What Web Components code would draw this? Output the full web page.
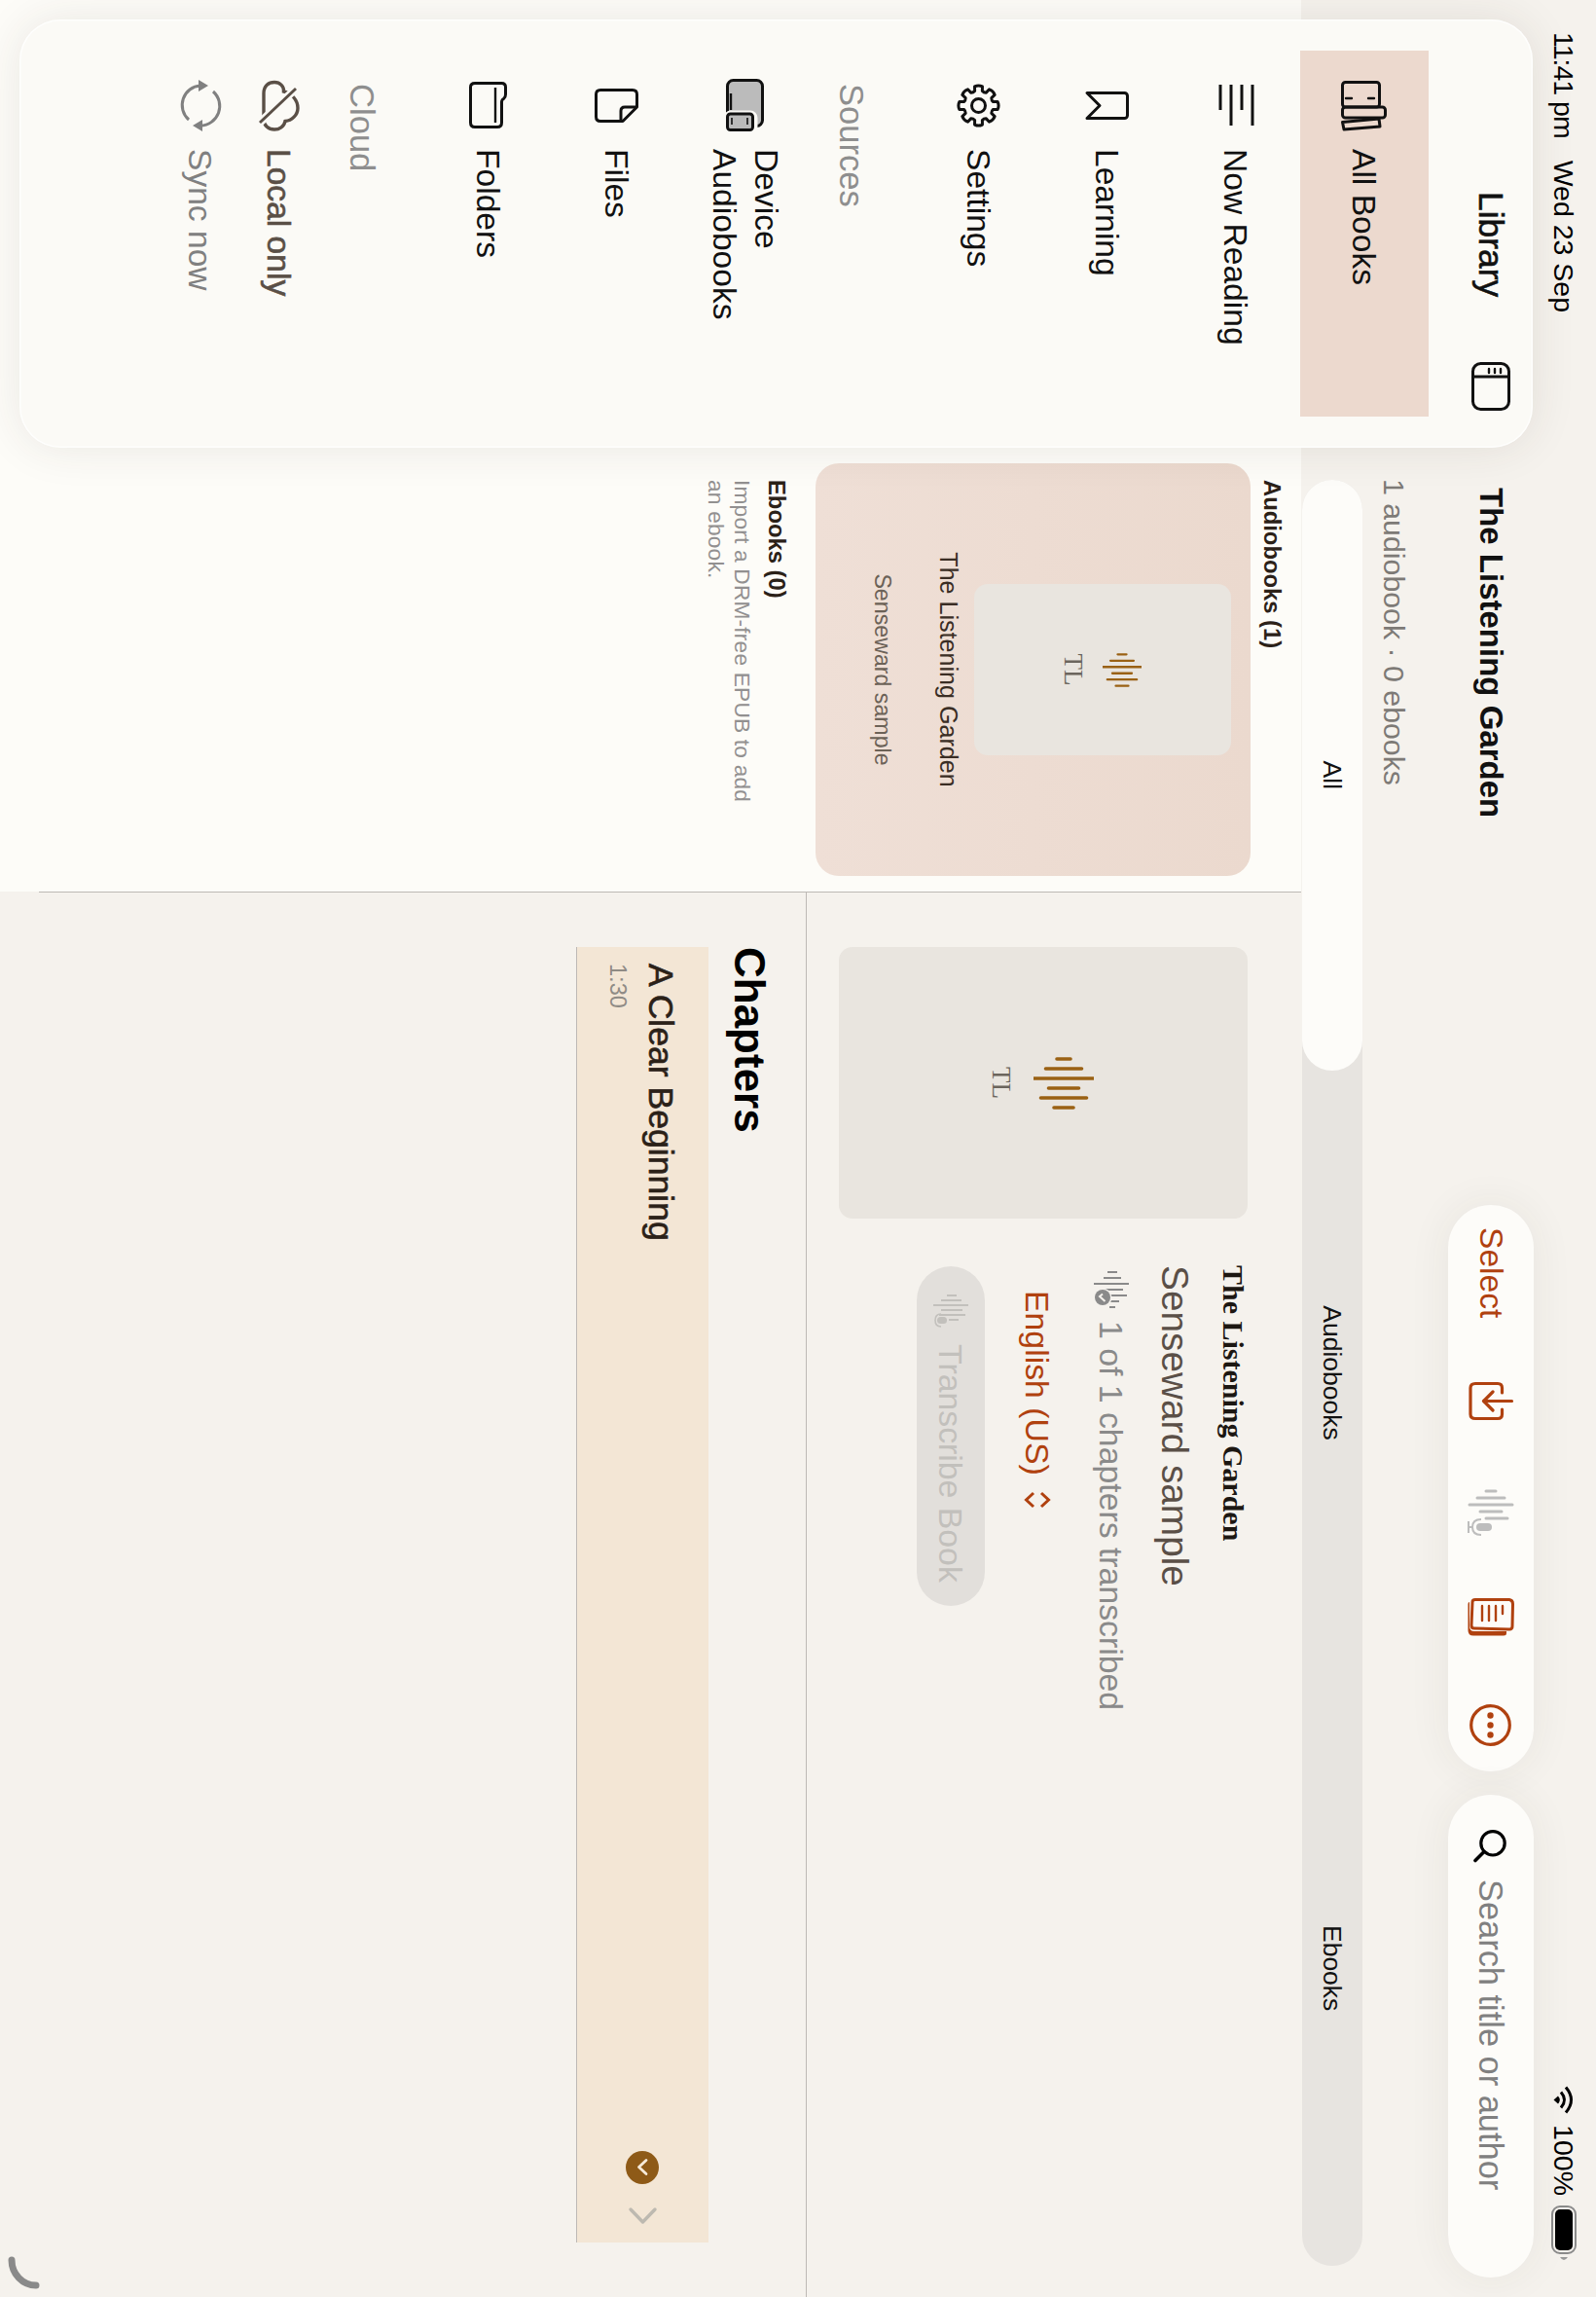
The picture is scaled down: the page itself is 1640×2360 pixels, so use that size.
<!DOCTYPE html>
<html>
<head>
<meta charset="utf-8">
<title>Library</title>
<style>
  html, body { margin: 0; padding: 0; background: #f5f2ed; }
  body { font-family: "Liberation Sans", Arial, sans-serif; }
</style>
</head>
<body>
<library-app></library-app>

<script>
(function() {
  const ORANGE = '#b0410f';

  function gearPath(cx, cy, outer, inner, teeth) {
    const pt = (r, a) => (cx + r * Math.cos(a)).toFixed(2) + ' ' + (cy + r * Math.sin(a)).toFixed(2);
    const step = Math.PI * 2 / teeth;
    let d = '';
    for (let i = 0; i < teeth; i++) {
      const a = i * step - Math.PI / 2;
      d += (i ? 'L' : 'M') + pt(outer, a - 0.2) + 'Q' + pt(outer + 1.6, a) + ' ' + pt(outer, a + 0.2);
      d += 'L' + pt(inner, a + step / 2 - 0.14) + 'Q' + pt(inner - 1.2, a + step / 2) + ' ' + pt(inner, a + step / 2 + 0.14);
    }
    return d + 'Z';
  }

  // all drawn upright, the whole app gets rotated afterwards
  const ICONS = {
    books: [51, 47, `<g fill="none" stroke="currentColor" stroke-width="3" stroke-linejoin="round" stroke-linecap="round">
      <rect x="1.5" y="7.5" width="25.5" height="38" rx="3"/><rect x="27" y="1.5" width="11" height="44" rx="3"/>
      <path d="M39 8L47 7L50 44L42.5 45.5Z"/><path d="M18 13V19M18 36V42" stroke-width="2.4"/></g>`],
    sidebar: [50, 40, `<g fill="none" stroke="currentColor" stroke-width="3" stroke-linecap="round">
      <rect x="1.5" y="1.5" width="47" height="37" rx="8"/><path d="M15 2V38"/><path d="M7 10H11M7 16H11M7 22H11" stroke-width="2.4"/></g>`],
    lines: [42, 38, `<path d="M0 2H42M0 13H26M0 24H42M0 35H26" fill="none" stroke="currentColor" stroke-width="3"/>`],
    bookmark: [29, 45, `<path d="M4.5 1.5H24.5a3 3 0 0 1 3 3V43L14.5 30L1.5 43V4.5a3 3 0 0 1 3-3z" fill="none" stroke="currentColor" stroke-width="3" stroke-linejoin="round"/>`],
    gear: [45, 45, `<path d="${gearPath(22.5, 22.5, 20, 15.5, 8)}" fill="none" stroke="currentColor" stroke-width="3" stroke-linejoin="round"/><circle cx="22.5" cy="22.5" r="7" fill="none" stroke="currentColor" stroke-width="3"/>`],
    device: [54, 39, `<rect x="1.5" y="1.5" width="47" height="36" rx="6" fill="#bbb" stroke="currentColor" stroke-width="3"/>
      <path d="M15 34H32" stroke="currentColor" stroke-width="2.4"/>
      <rect x="36" y="10" width="17" height="28" rx="4" fill="#bbb" stroke="#fbfaf6" stroke-width="7"/>
      <rect x="36" y="11.5" width="16.5" height="26" rx="3" fill="#bbb" stroke="currentColor" stroke-width="3"/>
      <path d="M40 17H47M40 33H47" stroke="currentColor" stroke-width="1.6"/>`],
    note: [35, 45, `<g fill="none" stroke="currentColor" stroke-width="3" stroke-linejoin="round">
      <path d="M19 1.5H6Q1.5 1.5 1.5 6V39Q1.5 43.5 6 43.5H29Q33.5 43.5 33.5 39V16Z"/><path d="M19 2V14Q19 18 23 18H33"/></g>`],
    folder: [48, 39, `<g fill="none" stroke="currentColor" stroke-width="3" stroke-linejoin="round">
      <path d="M5.5 1.5H13Q16 1.5 17.5 3.5Q18.5 5.5 21 5.5H42Q46.5 5.5 46.5 10V33Q46.5 37.5 42 37.5H5.5Q1.5 37.5 1.5 33V5.5Q1.5 1.5 5.5 1.5Z"/><path d="M6 12H42" stroke-width="2.4"/></g>`],
    cloudoff: [51, 42, `<path d="M13 37C5 37 1.5 32 1.5 26C1.5 20 6 16 11 16.5C13 8 20 2 28 2C35 2 41 8 41.5 15C47 16 50 21 50 26C50 32 46 37 40 37Z" fill="none" stroke="currentColor" stroke-width="3.4"/>
      <path d="M8 4L43 41" stroke="#fbfaf6" stroke-width="8"/><path d="M8 4L43 41" stroke="currentColor" stroke-width="3"/>`],
    sync: [53, 44, `<g fill="none" stroke="currentColor" stroke-width="3"><path d="M41 34A20 20 0 0 1 6 22"/><path d="M12 9A20 20 0 0 1 47 22"/></g>
      <path d="M0 24H12L6 14ZM41 20H53L47 30Z" fill="currentColor"/>`],
    importbox: [39, 46, `<g fill="none" stroke="currentColor" stroke-width="3.2" stroke-linecap="round" stroke-linejoin="round">
      <path d="M11 11.5H6Q1.5 11.5 1.5 16V39Q1.5 44 6 44H33Q37.5 44 37.5 39V16Q37.5 11.5 33 11.5H28"/><path d="M19.5 1.5V30M10 21L19.5 30.5L29 21"/></g>`],
    wavemic: [48, 47, `<path d="M2 18V28M9 9V37M16 1V45M23 12V34M30 6V28" fill="none" stroke="currentColor" stroke-width="3" stroke-linecap="round"/>
      <rect x="35" y="22" width="8" height="16" rx="4" fill="currentColor"/><path d="M31 33Q31 42 39 42Q47 42 47 33M39 42V46M33 46H45" fill="none" stroke="currentColor" stroke-width="2"/>`],
    pages: [39, 48, `<g fill="none" stroke="currentColor" stroke-width="3" stroke-linecap="round" stroke-linejoin="round">
      <path d="M6 1.5L29 2Q32 2 32 5L31 41Q31 44 28 44L4 43Q1.5 43 1.5 40V5Q2 1.5 6 1.5Z"/>
      <path d="M8 12H16M8 19H23M8 26H23M8 33H23" stroke-width="2.4"/></g>
      <path d="M34 8H36Q38.5 8 38.5 11V42Q38.5 47.5 33 47.5H6Q4 47.5 4 46H29Q34 46 34 41Z" fill="currentColor"/>`],
    more: [43, 43, `<circle cx="21.5" cy="21.5" r="19.8" fill="none" stroke="currentColor" stroke-width="3.2"/><circle cx="11.5" cy="21.5" r="3.2" fill="currentColor"/><circle cx="21.5" cy="21.5" r="3.2" fill="currentColor"/><circle cx="31.5" cy="21.5" r="3.2" fill="currentColor"/>`],
    search: [33, 33, `<circle cx="13.8" cy="14" r="12.2" fill="none" stroke="currentColor" stroke-width="3.2"/><path d="M22.5 23L31.5 32" fill="none" stroke="currentColor" stroke-width="3.6" stroke-linecap="round"/>`],
    wifi: [29, 21, `<g fill="none" stroke="currentColor" stroke-width="3"><path d="M1.5 8Q14.5 -3 27.5 8"/><path d="M6.5 13Q14.5 6 22.5 13"/></g><path d="M10.5 16Q14.5 12.5 18.5 16L14.5 20.5Z" fill="currentColor"/>`],
    battery: [58, 26, `<rect x="1" y="1" width="48" height="24" rx="8" fill="none" stroke="#8b8b8b" stroke-width="2"/><rect x="4" y="4" width="42" height="18" rx="5" fill="#000"/><path d="M53 9V17Q56 15 56 13Q56 11 53 9Z" fill="#9a9a9a"/>`],
    updown: [18, 28, `<path d="M2 10L9 2.5L16 10M2 18L9 25.5L16 18" fill="none" stroke="currentColor" stroke-width="3"/>`],
    wavedone: [42, 36, `<path d="M2 12V22M8 8V26M14 0V36M20 6V30M26 2V32M32 10V24M38 14V20" fill="none" stroke="currentColor" stroke-width="2"/>
      <circle cx="28" cy="27" r="9.5" fill="#f5f2ed"/><circle cx="28" cy="27" r="8" fill="currentColor"/><path d="M24.5 27L27 30L32 24.5" fill="none" stroke="#f5f2ed" stroke-width="2"/>`],
    wavemicthin: [36, 36, `<path d="M2 12V22M7 7V28M12 0V36M17 6V28M22 3V30M27 10V20" fill="none" stroke="currentColor" stroke-width="2"/>
      <rect x="24" y="22" width="7" height="10" rx="3.5" fill="currentColor"/><path d="M21 28Q21 34 27.5 34Q34 34 34 28" fill="none" stroke="currentColor" stroke-width="1.6"/>`],
    badgeback: [34, 34, `<circle cx="17" cy="17" r="17" fill="#8e5a17"/><path d="M9.5 14L16.5 21.5L23.5 14" transform="translate(0 -1)" fill="none" stroke="#f6ead8" stroke-width="2.8" stroke-linecap="round" stroke-linejoin="round"/>`],
    chevright: [17, 29, `<path d="M2 2L15 14.5L2 27" fill="none" stroke="#bdb9b0" stroke-width="3.4" stroke-linecap="round" stroke-linejoin="round"/>`]
  };

  class UiIcon extends HTMLElement {
    connectedCallback() {
      const shadow = this.shadowRoot || this.attachShadow({ mode: 'open' });
      const [w, h, body] = ICONS[this.getAttribute('name')];
      shadow.innerHTML = `<style>:host { display: block; flex: none; width: ${w}px; height: ${h}px; } svg { display: block; overflow: visible; }</style>
        <svg xmlns="http://www.w3.org/2000/svg" width="${w}" height="${h}" viewBox="0 0 ${w} ${h}">${body}</svg>`;
    }
  }

  class StatusBar extends HTMLElement {
    constructor() {
      super();
      this.attachShadow({ mode: 'open' }).innerHTML = `
        <style>
          :host { display: flex; height: 64px; flex: none; padding: 0 36px 0 33px; box-sizing: border-box; font-size: 28.5px; color: #000; }
          .left, .right { display: flex; align-items: center; height: 66px; }
          .left { flex: 1; gap: 23px; }
          .time { letter-spacing: -1px; }
          .right ui-icon:first-child { margin-right: 11px; }
          .right ui-icon:last-child { margin-left: 10px; }
        </style>
        <div class="left"><span class="time">11:41 pm</span><span>Wed 23 Sep</span></div>
        <div class="right"><ui-icon name="wifi"></ui-icon><span>100%</span><ui-icon name="battery"></ui-icon></div>`;
    }
  }

  class TopBar extends HTMLElement {
    constructor() {
      super();
      this.attachShadow({ mode: 'open' }).innerHTML = `
        <style>
          :host { display: flex; flex: none; height: 88px; align-items: center; }
          h1 { margin: 0 0 0 501px; width: 737px; font-size: 33px; font-weight: 700; color: #111; }
          .pill { background: #fdfcf9; height: 88px; border-radius: 44px; box-sizing: border-box; display: flex; align-items: center; box-shadow: 0 0 44px rgba(60, 50, 40, .07); }
          .tools { width: 582px; color: ${ORANGE}; padding-left: 23px; }
          .tools span { font-size: 33.6px; width: 159px; }
          .tools .off { color: #bdbdbd; margin-left: 71px; }
          .tools .pg { margin-left: 64px; }
          .tools .mr { margin-left: 70px; }
          .search { width: 496px; margin-left: 24px; padding-left: 36px; gap: 18px; font-size: 34.4px; color: #808080; }
          .search ui-icon { color: #000; }
        </style>
        <h1>The Listening Garden</h1>
        <div class="pill tools">
          <span>Select</span>
          <ui-icon name="importbox"></ui-icon>
          <ui-icon name="wavemic" class="off"></ui-icon>
          <ui-icon name="pages" class="pg"></ui-icon>
          <ui-icon name="more" class="mr"></ui-icon>
        </div>
        <div class="pill search"><ui-icon name="search"></ui-icon><span>Search title or author</span></div>`;
    }
  }

  class SegControl extends HTMLElement {
    constructor() {
      super();
      this.attachShadow({ mode: 'open' }).innerHTML = `
        <style>
          :host { display: grid; grid-template-columns: repeat(3, 1fr); flex: none; width: 1835px; height: 62px; margin-left: 493px; border-radius: 31px; background: #e7e4e0; font-size: 26.5px; color: #111; }
          div { display: flex; align-items: center; justify-content: center; border-radius: 31px; }
          .on { background: #fdfcf9; margin-right: 5px; }
        </style>
        <div class="on">All</div><div>Audiobooks</div><div>Ebooks</div>`;
    }
  }

  class SideItem extends HTMLElement {
    constructor() {
      super();
      this.attachShadow({ mode: 'open' }).innerHTML = `
        <style>
          :host { display: flex; align-items: center; box-sizing: border-box; height: 132px; width: 376px; margin-left: 32px; padding: 0 10px 0 26px; font-size: 33.6px; line-height: 43px; color: #111; }
          :host([selected]) { background: #ecd9ce; }
          :host([h="86"]) { height: 86px; }
          :host([h="76"]) { height: 76px; }
          .icon { flex: none; width: 60px; margin-right: 15px; display: flex; justify-content: center; }
        </style>
        <div class="icon"><slot name="icon"></slot></div>
        <div><slot></slot></div>`;
    }
  }

  class SideLabel extends HTMLElement {
    constructor() {
      super();
      this.attachShadow({ mode: 'open' }).innerHTML = `
        <style>:host { display: flex; align-items: center; box-sizing: border-box; padding: 22px 0 0 66px; height: 108px; font-size: 34.6px; color: #8e8e8e; }</style>
        <slot></slot>`;
    }
  }

  class SideBar extends HTMLElement {
    constructor() {
      super();
      this.attachShadow({ mode: 'open' }).innerHTML = `
        <style>
          :host { display: block; position: absolute; left: 20px; top: 65px; width: 440px; height: 1555px; box-sizing: border-box; border-radius: 42px; background: #fbfaf6; box-shadow: inset 0 0 0 1.5px rgba(255,255,255,.75), 0 0 46px rgba(60, 50, 40, .1); }
          header { display: flex; align-items: center; height: 86px; margin-bottom: 21px; padding-left: 177px; font-size: 35.4px; -webkit-text-stroke: .6px #111; color: #111; }
          header span { width: 175px; }
          .b { color: #5a4f46; -webkit-text-stroke: .6px #5a4f46; }
          .g { color: #808080; }
        </style>
        <header><span>Library</span><ui-icon name="sidebar"></ui-icon></header>
        <side-item selected><ui-icon slot="icon" name="books"></ui-icon>All Books</side-item>
        <side-item><ui-icon slot="icon" name="lines"></ui-icon>Now Reading</side-item>
        <side-item><ui-icon slot="icon" name="bookmark"></ui-icon>Learning</side-item>
        <side-item><ui-icon slot="icon" name="gear"></ui-icon>Settings</side-item>
        <side-label>Sources</side-label>
        <side-item><ui-icon slot="icon" name="device"></ui-icon>Device Audiobooks</side-item>
        <side-item><ui-icon slot="icon" name="note"></ui-icon>Files</side-item>
        <side-item><ui-icon slot="icon" name="folder"></ui-icon>Folders</side-item>
        <side-label style="height:106px">Cloud</side-label>
        <side-item h="86" class="b"><ui-icon slot="icon" name="cloudoff" style="color:#5a4f46"></ui-icon><span class="b">Local only</span></side-item>
        <side-item h="76" class="g"><ui-icon slot="icon" name="sync" style="color:#808080"></ui-icon><span class="g">Sync now</span></side-item>`;
    }
  }

  // cover with waveform and initials, used in the card and in the detail panel
  class CoverArt extends HTMLElement {
    constructor() {
      super();
      const big = this.hasAttribute('big');
      const w = big ? 279 : 176, h = big ? 420 : 264, bw = big ? 54 : 35, bh = big ? 62 : 40, gap = big ? 23 : 20;
      const lens = [14, 37, 62, 31, 47, 20];
      const bars = lens.map((l, i) => `<path d="M${2 + i * 10} ${31 - l / 2}V${31 + l / 2}"/>`).join('');
      this.attachShadow({ mode: 'open' }).innerHTML = `
        <style>
          :host { display: flex; flex: none; flex-direction: column; align-items: center; justify-content: center; gap: ${gap}px; width: ${w}px; height: ${h}px; border-radius: 14px; background: #e9e5df; }
          span { font: 27px/20px "Liberation Serif", "Times New Roman", serif; color: #6b655d; }
          svg { display: block; }
        </style>
        <svg xmlns="http://www.w3.org/2000/svg" width="${bw}" height="${bh}" viewBox="0 0 54 62"><g fill="none" stroke="#9a6114" stroke-width="3.6" stroke-linecap="round">${bars}</g></svg>
        <span>TL</span>`;
    }
  }

  class BookCard extends HTMLElement {
    constructor() {
      super();
      this.attachShadow({ mode: 'open' }).innerHTML = `
        <style>
          :host { display: flex; flex-direction: column; align-items: center; box-sizing: border-box; width: 424px; height: 447px; padding-top: 20px; border-radius: 24px; background: linear-gradient(#ebd9ce, #efdfd6); }
          .t { margin-top: 10px; font-size: 25.1px; line-height: 32px; color: #3a2d24; }
          .s { margin-top: 36px; font-size: 23.2px; line-height: 32px; color: #6c6257; }
        </style>
        <cover-art></cover-art>
        <div class="t"><slot name="title"></slot></div>
        <div class="s"><slot name="author"></slot></div>`;
    }
  }

  class BookList extends HTMLElement {
    constructor() {
      super();
      this.attachShadow({ mode: 'open' }).innerHTML = `
        <style>
          :host { display: block; flex: none; box-sizing: border-box; width: 916px; padding: 15px 16px 0 476px; background: #fdfcf8; }
          h2 { margin: 0 0 0 17px; font-size: 23.8px; line-height: 30px; font-weight: 700; color: #2b2118; }
          .a { margin-bottom: 7px; }
          .e { margin-top: 25px; }
          p { margin: 7px 0 0 17px; width: 345px; font-size: 22.7px; letter-spacing: .2px; line-height: 27px; color: #929090; }
        </style>
        <h2 class="a">Audiobooks (1)</h2>
        <book-card><span slot="title">The Listening Garden</span><span slot="author">Senseward sample</span></book-card>
        <h2 class="e">Ebooks (0)</h2>
        <p>Import a DRM-free EPUB to add an ebook.</p>`;
    }
  }

  class DetailHead extends HTMLElement {
    constructor() {
      super();
      this.attachShadow({ mode: 'open' }).innerHTML = `
        <style>
          :host { display: flex; flex: none; box-sizing: border-box; height: 509px; padding: 55px 0 0 56px; border-bottom: 1px solid #bdb9b5; }
          .info { display: flex; flex-direction: column; align-items: flex-start; margin: -3px 0 0 48px; }
          .t { font: 700 30px/36px "Liberation Serif", "Times New Roman", serif; color: #1c1712; }
          .s { margin-top: 20px; font-size: 38.8px; line-height: 44px; color: #5a4f47; }
          .c { display: flex; align-items: center; margin: 23px 0 0 5px; height: 40px; gap: 10px; font-size: 33.8px; color: #8a8a8a; }
          .l { display: flex; align-items: center; margin-top: 36px; height: 40px; gap: 16px; margin-left: 26px; font-size: 33.8px; color: ${ORANGE}; }
          button { display: flex; align-items: center; gap: 16px; margin: 34px 0 0 1px; width: 349px; height: 70px; box-sizing: border-box; padding: 0 0 0 28px; border: 0; border-radius: 35px; background: #e2dfdb; font: 33.8px "Liberation Sans", Arial, sans-serif; color: #c2c0bc; }
        </style>
        <cover-art big></cover-art>
        <div class="info">
          <div class="t">The Listening Garden</div>
          <div class="s">Senseward sample</div>
          <div class="c"><ui-icon name="wavedone"></ui-icon><span>1 of 1 chapters transcribed</span></div>
          <div class="l"><span>English (US)</span><ui-icon name="updown"></ui-icon></div>
          <button><ui-icon name="wavemicthin"></ui-icon><span>Transcribe Book</span></button>
        </div>`;
    }
  }

  class ChapterRow extends HTMLElement {
    constructor() {
      super();
      this.attachShadow({ mode: 'open' }).innerHTML = `
        <style>
          :host { display: flex; align-items: center; box-sizing: border-box; width: 1331px; height: 136px; padding: 0 19px 0 17px; background: #f3e6d5; border-bottom: 1px solid #bdb9b5; }
          .txt { flex: 1; }
          .n { font-size: 35.6px; line-height: 40px; -webkit-text-stroke: .6px #2b2118; color: #2b2118; }
          .d { margin-top: 10px; font-size: 23.6px; line-height: 28px; color: #8f8b85; }
          .gap { margin-right: 24px; }
        </style>
        <div class="txt"><div class="n"><slot name="name"></slot></div><div class="d"><slot name="time"></slot></div></div>
        <ui-icon name="badgeback" class="gap"></ui-icon>
        <ui-icon name="chevright"></ui-icon>`;
    }
  }

  class DetailPanel extends HTMLElement {
    constructor() {
      super();
      this.attachShadow({ mode: 'open' }).innerHTML = `
        <style>
          :host { display: block; flex: 1; }
          h2 { margin: 32px 0 16px 56px; font-size: 44px; line-height: 52px; font-weight: 700; color: #000; }
          chapter-row { margin-left: 56px; }
        </style>
        <detail-head></detail-head>
        <h2>Chapters</h2>
        <chapter-row><span slot="name">A Clear Beginning</span><span slot="time">1:30</span></chapter-row>`;
    }
  }

  class LibraryApp extends HTMLElement {
    constructor() {
      super();
      this.attachShadow({ mode: 'open' }).innerHTML = `
        <style>
          :host { display: block; width: 1640px; height: 2360px; overflow: hidden; contain: paint; }
          .turn { display: flex; flex-direction: column; position: relative; width: 2360px; height: 1640px; background: #f5f2ed; transform-origin: 0 0; transform: translateX(1640px) rotate(90deg); }
          .sub { flex: none; box-sizing: border-box; height: 88px; padding: 24px 0 0 492px; font-size: 30.3px; line-height: 64px; color: #7d7a76; }
          .body { flex: 1; display: flex; margin-top: 1px; min-height: 0; }
          .rule { flex: none; width: 1px; height: 1297px; background: #bdb9b5; }
          .grip { position: absolute; left: 2316px; top: 1597px; }
        </style>
        <div class="turn">
          <status-bar></status-bar>
          <top-bar></top-bar>
          <div class="sub">1 audiobook · 0 ebooks</div>
          <seg-control></seg-control>
          <div class="body">
            <book-list></book-list>
            <div class="rule"></div>
            <detail-panel></detail-panel>
          </div>
          <side-bar></side-bar>
          <svg class="grip" xmlns="http://www.w3.org/2000/svg" width="38" height="37" viewBox="0 0 38 37"><path d="M6 31A26 25 0 0 0 32 6" fill="none" stroke="#8a8a8a" stroke-width="7" stroke-linecap="round"/></svg>
        </div>`;
    }
  }

  customElements.define('ui-icon', UiIcon);
  customElements.define('status-bar', StatusBar);
  customElements.define('top-bar', TopBar);
  customElements.define('seg-control', SegControl);
  customElements.define('side-item', SideItem);
  customElements.define('side-label', SideLabel);
  customElements.define('side-bar', SideBar);
  customElements.define('cover-art', CoverArt);
  customElements.define('book-card', BookCard);
  customElements.define('book-list', BookList);
  customElements.define('detail-head', DetailHead);
  customElements.define('chapter-row', ChapterRow);
  customElements.define('detail-panel', DetailPanel);
  customElements.define('library-app', LibraryApp);
})();
</script>
</body>
</html>
